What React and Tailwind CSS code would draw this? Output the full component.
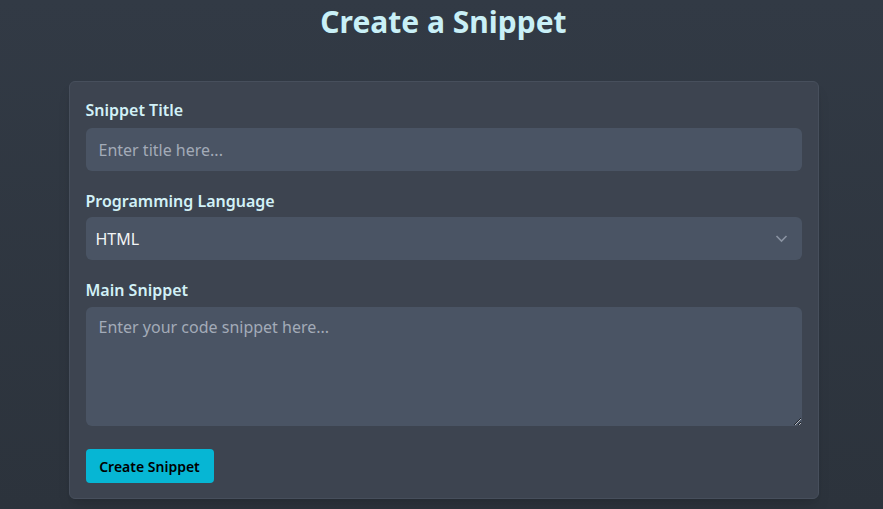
import React from "react";

const App = () => {
  return (
    <div
      className="min-h-[509px] w-full bg-gradient-to-b from-[#323a45] to-[#2c333c] flex flex-col items-center pl-[4px]"
      style={{ fontFamily: '"Noto Sans", "Open Sans", sans-serif' }}
    >
      <h1 className="text-[30px] font-bold text-[#c9f0f7] leading-none pt-[7px] h-[81px]">
        Create a Snippet
      </h1>

      <form className="w-[750px] bg-[#3d4450] border border-[#474f5c] rounded-md shadow-lg px-[16px] pt-[17px] pb-[15px]">
        {/* Title */}
        <label className="block text-[16px] leading-[22px] font-semibold text-[#d2f1f7] mb-[7px]">
          Snippet Title
        </label>
        <input
          type="text"
          placeholder="Enter title here..."
          className="w-full h-[43px] rounded-md bg-[#4a5464] px-[13px] text-[16px] text-gray-100 placeholder-[#a3abb8] outline-none"
        />

        {/* Language */}
        <label className="block text-[16px] leading-[22px] font-semibold text-[#d2f1f7] mt-[19px] mb-[5px]">
          Programming Language
        </label>
        <div className="relative">
          <select className="w-full h-[43px] rounded-md bg-[#4a5464] px-[10px] text-[16px] text-gray-100 outline-none appearance-none">
            <option>HTML</option>
          </select>
          <svg
            className="absolute right-[14px] top-[17px] pointer-events-none"
            width="13"
            height="9"
            viewBox="0 0 13 9"
            fill="none"
          >
            <path d="M1.5 2l5 5 5-5" stroke="#8a93a2" strokeWidth="1.6" />
          </svg>
        </div>

        {/* Snippet */}
        <label className="block text-[16px] leading-[22px] font-semibold text-[#d2f1f7] mt-[19px] mb-[6px]">
          Main Snippet
        </label>
        <textarea
          placeholder="Enter your code snippet here..."
          className="block w-full h-[119px] rounded-md bg-[#4a5464] px-[13px] py-[8px] text-[16px] text-gray-100 placeholder-[#a3abb8] outline-none"
        />

        <button
          type="button"
          className="mt-[23px] h-[34px] w-[128px] rounded bg-[#06b6d4] text-[14px] font-semibold text-black"
        >
          Create Snippet
        </button>
      </form>
    </div>
  );
};

export default App;
